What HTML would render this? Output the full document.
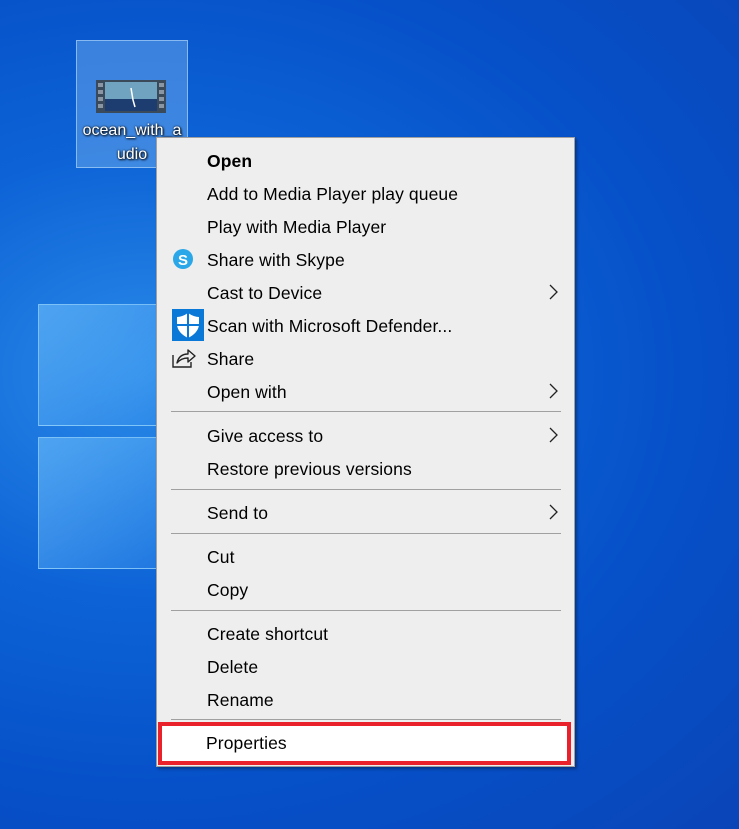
<!DOCTYPE html>
<html><head><style>
*{margin:0;padding:0;box-sizing:border-box}
body{width:739px;height:829px;overflow:hidden;position:relative;font-family:"Liberation Sans",sans-serif;
background:radial-gradient(ellipse at 20% 45%,#2a8ae8 0%,#0d63d6 35%,#0650c8 65%,#0a45b8 100%);}
.pane{position:absolute;background:linear-gradient(135deg,rgba(120,200,255,.55),rgba(60,150,240,.35));border:1px solid rgba(170,225,255,.6)}
.icon{position:absolute;left:76px;top:40px;width:112px;height:128px;background:rgba(120,180,240,.45);border:1px solid rgba(170,210,250,.7)}
.lbl{position:absolute;left:76px;width:112px;text-align:center;color:#fff;font-size:16px;text-shadow:0 0 2px #000,1px 1px 2px #000}
.menu{position:absolute;left:156px;top:137px;width:419px;height:630px;background:#eeeeee;border:1px solid #a0a0a0;box-shadow:2px 2px 3px rgba(0,0,0,.35)}
.it{position:absolute;left:50px;font-size:17.5px;color:#000;line-height:20px;letter-spacing:0.1px}
.sep{position:absolute;left:14px;width:390px;height:1px;background:#a0a0a0}
.arr{position:absolute;left:392px;width:10px;height:16px}
</style></head><body>
<div class="pane" style="left:38px;top:304px;width:120px;height:122px"></div>
<div class="pane" style="left:38px;top:437px;width:120px;height:132px"></div>
<div class="icon"></div>
<svg style="position:absolute;left:96px;top:80px" width="70" height="33">
<rect x="0" y="0" width="70" height="33" fill="#3a4a5a"/>
<g fill="#8a96a3"><rect x="2" y="3" width="5" height="4"/><rect x="2" y="10" width="5" height="4"/><rect x="2" y="17" width="5" height="4"/><rect x="2" y="24" width="5" height="4"/>
<rect x="63" y="3" width="5" height="4"/><rect x="63" y="10" width="5" height="4"/><rect x="63" y="17" width="5" height="4"/><rect x="63" y="24" width="5" height="4"/></g>
<rect x="9" y="2" width="52" height="17" fill="#6fa3c0"/><rect x="9" y="19" width="52" height="12" fill="#1d3d70"/>
<path d="M35 8 L37 20 L39 27" stroke="#fff" stroke-width="1.5" fill="none"/></svg>
<div class="lbl" style="top:122px">ocean_with_a</div>
<div class="lbl" style="top:146px">udio</div>
<div class="menu">
<div class="it" style="top:13px;font-weight:bold">Open</div>
<div class="it" style="top:46px">Add to Media Player play queue</div>
<div class="it" style="top:79px">Play with Media Player</div>
<svg style="position:absolute;left:15px;top:110px" width="22" height="22"><circle cx="11" cy="11" r="10" fill="#2aa7e8"/><text x="11" y="17" font-size="15" font-weight="bold" fill="#fff" text-anchor="middle" font-family="Liberation Sans">S</text></svg>
<div class="it" style="top:112px">Share with Skype</div>
<div class="it" style="top:145px">Cast to Device</div>
<svg class="arr" style="top:146px" viewBox="0 0 10 16"><path d="M1 1 L8 8 L1 15" stroke="#222" stroke-width="1.3" fill="none"/></svg>
<svg style="position:absolute;left:15px;top:171px" width="32" height="32"><rect width="32" height="32" fill="#0a78d7"/><path d="M16 4 Q10 8 5 8 L5 16 Q6 24 16 29 Q26 24 27 16 L27 8 Q22 8 16 4Z" fill="#fff"/><path d="M16 4 V29 M5 16 H27" stroke="#0a78d7" stroke-width="2"/></svg>
<div class="it" style="top:178px">Scan with Microsoft Defender...</div>
<svg style="position:absolute;left:14px;top:209px" width="26" height="22"><path d="M2 8 V20 H20 V15" stroke="#222" stroke-width="1.4" fill="none"/><path d="M6 16 Q8 7 17 7 V3 L24 9 L17 15 V11 Q10 11 6 16Z" stroke="#222" stroke-width="1.4" fill="none" stroke-linejoin="round"/></svg>
<div class="it" style="top:211px">Share</div>
<div class="it" style="top:244px">Open with</div>
<svg class="arr" style="top:245px" viewBox="0 0 10 16"><path d="M1 1 L8 8 L1 15" stroke="#222" stroke-width="1.3" fill="none"/></svg>
<div class="sep" style="top:273px"></div>
<div class="it" style="top:288px">Give access to</div>
<svg class="arr" style="top:289px" viewBox="0 0 10 16"><path d="M1 1 L8 8 L1 15" stroke="#222" stroke-width="1.3" fill="none"/></svg>
<div class="it" style="top:321px">Restore previous versions</div>
<div class="sep" style="top:351px"></div>
<div class="it" style="top:365px">Send to</div>
<svg class="arr" style="top:366px" viewBox="0 0 10 16"><path d="M1 1 L8 8 L1 15" stroke="#222" stroke-width="1.3" fill="none"/></svg>
<div class="sep" style="top:395px"></div>
<div class="it" style="top:409px">Cut</div>
<div class="it" style="top:442px">Copy</div>
<div class="sep" style="top:472px"></div>
<div class="it" style="top:486px">Create shortcut</div>
<div class="it" style="top:519px">Delete</div>
<div class="it" style="top:552px">Rename</div>
<div class="sep" style="top:581px"></div>
</div>
<div style="position:absolute;left:158px;top:722px;width:413px;height:43px;border:4px solid #e8212a;background:#fff"></div>
<div class="it" style="position:absolute;left:206px;top:733px">Properties</div>
</body></html>
